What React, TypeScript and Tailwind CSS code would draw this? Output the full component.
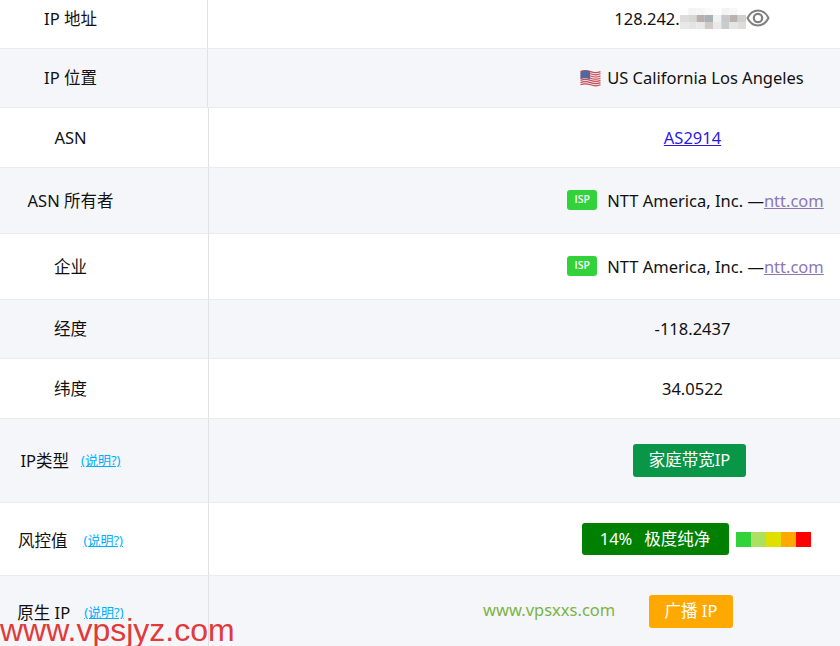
import React from "react";

// pixelated part of the IP address
const blur = [
  ["#ffffff", "#f4f4f4", "#f5f5f5", "#fafafa", "#ffffff", "#f3f3f3", "#f7f7f7", "#ffffff"],
  ["#dcdcdc", "#d6d6d6", "#b9afac", "#a9b1b8", "#f1f1f1", "#c6c8cc", "#bdb1ad", "#d0d0d0"],
  ["#e8e8e8", "#e4e4e4", "#e8e8e8", "#d1c9c5", "#e9e9e9", "#c8cccc", "#e4e4e4", "#dcdcdc"],
];

function IpBlur() {
  return (
    <svg width="66" height="21" viewBox="0 0 66 21" className="-mt-[2px] block" aria-hidden="true">
      {blur.map((row, y) =>
        row.map((fill, x) => <rect key={`${x}-${y}`} x={x * 8.25} y={y * 7} width="8.25" height="7" fill={fill} />)
      )}
    </svg>
  );
}

function EyeIcon() {
  return (
    <svg width="24" height="20" viewBox="0 0 24 20" fill="none" stroke="#808080" className="-mt-[2px] block" aria-hidden="true">
      <path d="M1.5 10C4 5 8 2.5 12 2.5S20 5 22.5 10C20 15 16 17.5 12 17.5S4 15 1.5 10Z" strokeWidth="2" />
      <circle cx="12" cy="10" r="4.2" strokeWidth="2.2" />
    </svg>
  );
}

function UsFlag() {
  const stripes = [1.2, 3.4, 5.6, 7.8, 10, 12.2, 14.4];
  return (
    <svg width="21" height="17" viewBox="0 0 21 17" fill="none" className="block" aria-hidden="true">
      <path d="M0.5 1.5Q5 -0.5 10.5 1.5T20.5 1.5V15.5Q15 17.5 10.5 15.5T0.5 15.5Z" fill="#f3e6e6" />
      {stripes.map((y) => (
        <path key={y} d={`M0.5 ${y + 0.4}Q5 ${y - 1.6} 10.5 ${y + 0.4}T20.5 ${y + 0.4}`} stroke="#c4505e" strokeWidth="1.2" />
      ))}
      <path d="M0.5 1.5Q5 -0.5 10 1.3V9.2Q5 7.5 0.5 9Z" fill="#56669a" />
    </svg>
  );
}

function Hint() {
  return <a className="text-[13px] text-[#00b0ff] underline">(说明?)</a>;
}

function IspTag() {
  return (
    <span className="mb-[4px] flex h-5 w-[30px] items-center justify-center rounded-[3px] bg-[#32d23a] font-['Open_Sans',sans-serif] text-[10.5px] font-semibold text-white">
      ISP
    </span>
  );
}

function Owner() {
  return (
    <div className="ml-[6px] flex items-center gap-[10px]">
      <IspTag />
      <span className="whitespace-nowrap">
        NTT America, Inc. —<a className="text-[#8e77b5] underline">ntt.com</a>
      </span>
    </div>
  );
}

interface RowProps {
  label: React.ReactNode;
  height: string;
  alt?: boolean;
  line?: string;
  shift?: string;
  children: React.ReactNode;
}

function Row({ label, height, alt, line = "w-[209px]", shift = "", children }: RowProps) {
  return (
    <div className={`flex border-b border-[#e9ebef] ${height} ${alt ? "bg-[#f4f6fa]" : "bg-white"}`}>
      <div className={`flex shrink-0 items-center border-r border-[#dfe1e5] ${line} ${shift}`}>
        <div className="flex w-[141px] shrink-0 items-center justify-center">{label}</div>
      </div>
      <div className={`flex min-w-0 flex-1 items-center justify-center pl-[336px] ${shift}`}>{children}</div>
    </div>
  );
}

export default function App() {
  return (
    <div className="relative h-[646px] w-[840px] overflow-hidden bg-white font-['Noto_Sans','Noto_Sans_CJK_SC',sans-serif] text-[16.5px] text-[#111]">
      <Row label="IP 地址" height="h-[49px]" line="w-[208px]" shift="pb-[10px]">
        <div className="flex items-center">
          <span>128.242.</span>
          <IpBlur />
          <EyeIcon />
        </div>
      </Row>
      <Row label="IP 位置" height="h-[59px]" alt line="w-[208px]">
        <div className="flex items-center gap-[6px]">
          <UsFlag />
          <span className="whitespace-nowrap">US California Los Angeles</span>
        </div>
      </Row>
      <Row label="ASN" height="h-[60px]" shift="pt-[2px]">
        <a className="text-[#2a1ae0] underline">AS2914</a>
      </Row>
      <Row label="ASN 所有者" height="h-[66px]" alt shift="pt-[2px]">
        <Owner />
      </Row>
      <Row label="企业" height="h-[66px]" shift="pt-[2px]">
        <Owner />
      </Row>
      <Row label="经度" height="h-[59px]" alt>
        -118.2437
      </Row>
      <Row label="纬度" height="h-[60px]" shift="pt-[2px]">
        34.0522
      </Row>
      <Row
        label={
          <div className="flex items-center gap-3">
            <span className="mt-[2px]">IP类型</span>
            <Hint />
          </div>
        }
        height="h-[84px]"
        alt
      >
        <span className="mr-[6px] flex h-[33px] w-[113px] items-center justify-center rounded-[3px] bg-[#0a9648] text-white">家庭带宽IP</span>
      </Row>
      <Row
        label={
          <div className="mt-[4px] flex items-center gap-4">
            <span>风控值</span>
            <Hint />
          </div>
        }
        height="h-[73px]"
      >
        <div className="ml-[7px] flex items-center gap-[7px]">
          <span className="flex h-8 w-[147px] items-center justify-center gap-3 rounded-[3px] bg-[#008000] text-white">
            <span>14%</span>
            <span>极度纯净</span>
          </span>
          <div className="flex h-[15px]">
            <div className="w-[15px] bg-[#32d23a]" />
            <div className="w-[15px] bg-[#addf60]" />
            <div className="w-[15px] bg-[#dfdf00]" />
            <div className="w-[15px] bg-[#ffa800]" />
            <div className="w-[15px] bg-[#ff0000]" />
          </div>
        </div>
      </Row>
      <Row
        label={
          <div className="mt-[4px] flex items-center gap-[14px]">
            <span>原生 IP</span>
            <Hint />
          </div>
        }
        height="h-[71px]"
        alt
      >
        <span className="mr-[3px] flex h-[33px] w-[84px] items-center justify-center rounded-[3px] bg-[#ffa800] text-white">广播 IP</span>
      </Row>

      {/* watermarks sit over the table */}
      <span className="absolute left-[483px] top-[598px] text-[#7cb342]">www.vpsxxs.com</span>
      <span className="absolute left-0 top-[612px] font-['Liberation_Sans',sans-serif] text-[32px] leading-[36px] text-[#e03a3a]">www.vpsjyz.com</span>
    </div>
  );
}
